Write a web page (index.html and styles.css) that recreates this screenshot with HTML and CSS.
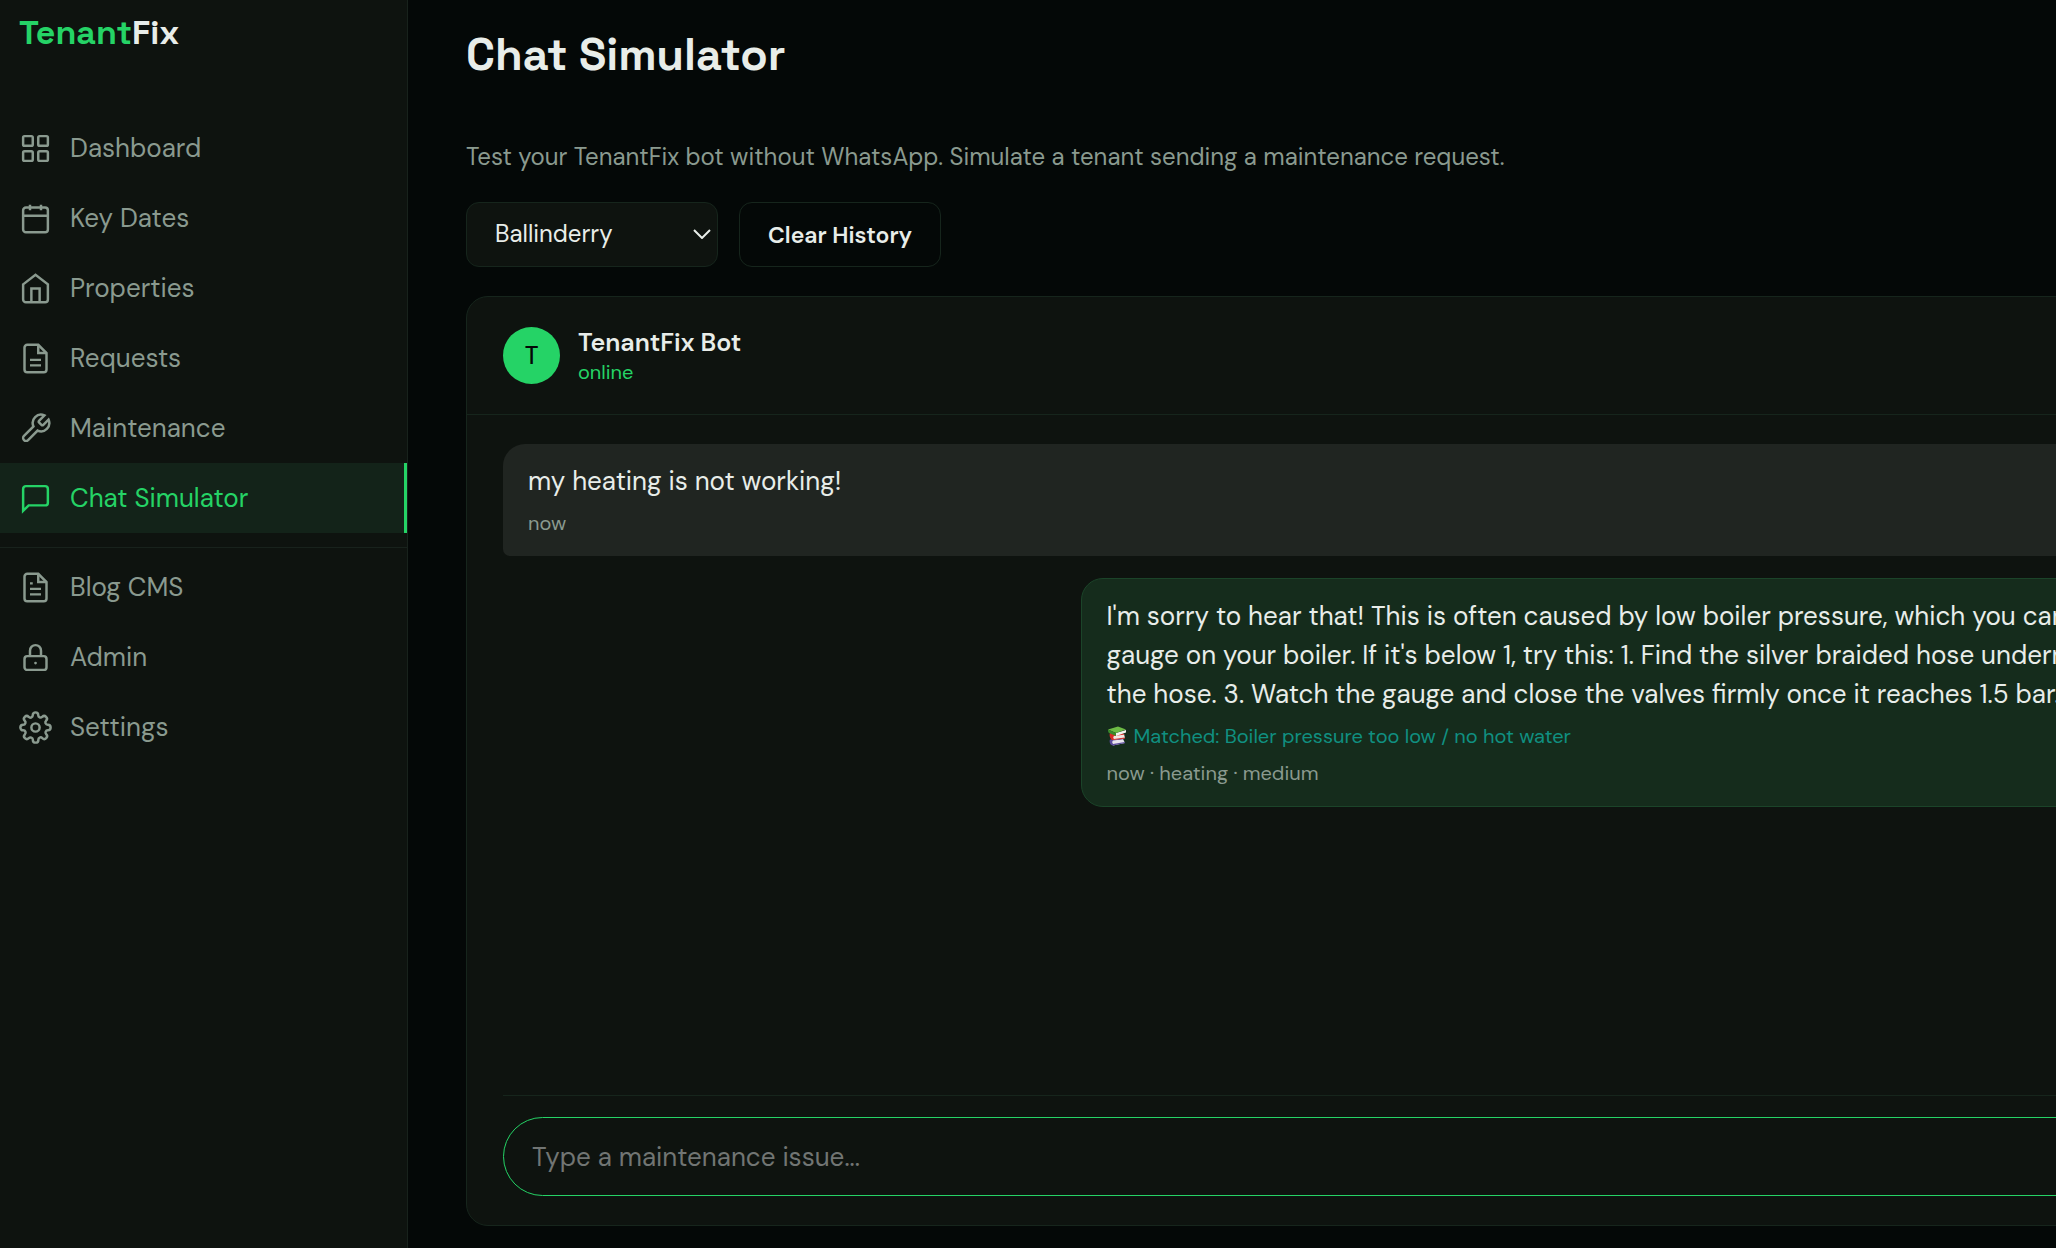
FILE: index.html
```
<!DOCTYPE html>
<html lang="en">

<head>
    <meta charset="UTF-8">
    <meta name="viewport" content="width=device-width, initial-scale=1.0">
    <title>TenantFix - Chat Simulator</title>
    <link rel="stylesheet" href="styles.css">
</head>

<body>
    <div class="layout">
        <aside class="sidebar">
            <a class="logo" href="#"><span>Tenant</span>Fix</a>

            <nav class="nav">
                <a href="#">
                    <svg viewBox="0 0 24 24"><rect x="3" y="3" width="7" height="7" rx="1"/><rect x="14" y="3" width="7" height="7" rx="1"/><rect x="3" y="14" width="7" height="7" rx="1"/><rect x="14" y="14" width="7" height="7" rx="1"/></svg>
                    Dashboard
                </a>
                <a href="#">
                    <svg viewBox="0 0 24 24"><rect x="3" y="4" width="18" height="18" rx="2"/><path d="M16 2v4M8 2v4M3 10h18"/></svg>
                    Key Dates
                </a>
                <a href="#">
                    <svg viewBox="0 0 24 24"><path d="M3 9l9-7 9 7v11a2 2 0 0 1-2 2H5a2 2 0 0 1-2-2z"/><path d="M9 22V12h6v10"/></svg>
                    Properties
                </a>
                <a href="#">
                    <svg viewBox="0 0 24 24"><path d="M14 2H6a2 2 0 0 0-2 2v16a2 2 0 0 0 2 2h12a2 2 0 0 0 2-2V8z"/><path d="M14 2v6h6M16 13H8M16 17H8"/></svg>
                    Requests
                </a>
                <a href="#">
                    <svg viewBox="0 0 24 24"><path d="M14.7 6.3a1 1 0 0 0 0 1.4l1.6 1.6a1 1 0 0 0 1.4 0l3.77-3.77a6 6 0 0 1-7.94 7.94l-6.91 6.91a2.12 2.12 0 0 1-3-3l6.91-6.91a6 6 0 0 1 7.94-7.94l-3.76 3.76z"/></svg>
                    Maintenance
                </a>
                <a href="#" class="active">
                    <svg viewBox="0 0 24 24"><path d="M21 15a2 2 0 0 1-2 2H7l-4 4V5a2 2 0 0 1 2-2h14a2 2 0 0 1 2 2z"/></svg>
                    Chat Simulator
                </a>
            </nav>

            <nav class="nav nav-admin">
                <a href="#">
                    <svg viewBox="0 0 24 24"><path d="M14 2H6a2 2 0 0 0-2 2v16a2 2 0 0 0 2 2h12a2 2 0 0 0 2-2V8z"/><path d="M14 2v6h6M16 13H8M16 17H8M10 9H8"/></svg>
                    Blog CMS
                </a>
                <a href="#">
                    <svg viewBox="0 0 24 24"><rect x="4" y="11" width="16" height="10" rx="2"/><path d="M8 11V7a4 4 0 0 1 8 0v4"/><circle class="dot" cx="12" cy="16" r="1"/></svg>
                    Admin
                </a>
                <a href="#">
                    <svg viewBox="0 0 24 24"><circle cx="12" cy="12" r="3"/><path d="M19.4 15a1.65 1.65 0 0 0 .33 1.82l.06.06a2 2 0 0 1-2.83 2.83l-.06-.06a1.65 1.65 0 0 0-1.82-.33 1.65 1.65 0 0 0-1 1.51V21a2 2 0 0 1-4 0v-.09A1.65 1.65 0 0 0 9 19.4a1.65 1.65 0 0 0-1.82.33l-.06.06a2 2 0 0 1-2.83-2.83l.06-.06a1.65 1.65 0 0 0 .33-1.82 1.65 1.65 0 0 0-1.51-1H3a2 2 0 0 1 0-4h.09A1.65 1.65 0 0 0 4.6 9a1.65 1.65 0 0 0-.33-1.82l-.06-.06a2 2 0 0 1 2.83-2.83l.06.06a1.65 1.65 0 0 0 1.82.33H9a1.65 1.65 0 0 0 1-1.51V3a2 2 0 0 1 4 0v.09a1.65 1.65 0 0 0 1 1.51 1.65 1.65 0 0 0 1.82-.33l.06-.06a2 2 0 0 1 2.83 2.83l-.06.06a1.65 1.65 0 0 0-.33 1.82V9a1.65 1.65 0 0 0 1.51 1H21a2 2 0 0 1 0 4h-.09a1.65 1.65 0 0 0-1.51 1z"/></svg>
                    Settings
                </a>
            </nav>
        </aside>

        <main class="main">
            <h1>Chat Simulator</h1>
            <p class="intro">Test your TenantFix bot without WhatsApp. Simulate a tenant sending a maintenance request.</p>

            <div class="controls">
                <div class="select-wrap">
                    <select id="property" aria-label="Property">
                        <option>Ballinderry</option>
                    </select>
                    <svg viewBox="0 0 18 10"><path d="M1 1l8 8 8-8"/></svg>
                </div>
                <button type="button" class="btn" id="clearHistory">Clear History</button>
            </div>

            <section class="chat">
                <header class="chat-header">
                    <div class="avatar">T</div>
                    <div class="bot-info">
                        <div class="bot-name">TenantFix Bot</div>
                        <div class="bot-status">online</div>
                    </div>
                </header>

                <div class="messages">
                    <div class="message tenant">
                        <p>my heating is not working!</p>
                        <div class="meta">now</div>
                    </div>
                    <div class="message bot">
                        <p>I'm sorry to hear that! This is often caused by low boiler pressure, which you can<br>
                            gauge on your boiler. If it's below 1, try this: 1. Find the silver braided hose underneath<br>
                            the hose. 3. Watch the gauge and close the valves firmly once it reaches 1.5 bar.</p>
                        <div class="matched">
                            <svg viewBox="0 0 20 20">
                                <path fill="#e8e4ee" d="M4 14l12-1 2 4-12 2.500z"/>
                                <path fill="#5b4a9c" d="M3 13.500l11-1 4 .5-12 1.500c-1 1-1 2.500 0 3.500l12-2v1l-12 2.500c-3 0-4-4-3-6z"/>
                                <path fill="#f0e6e2" d="M5 9l12-1 1 4-12 2z"/>
                                <path fill="#d92b26" d="M3 7l12 0 3 1.500-11 1.500c-1 1-1 2 0 3l11-1.500v1l-12 1.500c-3 0-4-5-3-7z"/>
                                <path fill="#f2f4ee" d="M9 7l10-3 0 2.500-10 3.500z"/>
                                <path fill="#6dbb45" d="M1 3.500l10-3 8 3-10 3.500z"/>
                                <path fill="#3a8a2c" d="M1 3.500l8 3.500 0 3-7-3c-1-1-1-2.500-1-3.500z"/>
                            </svg>
                            Matched: Boiler pressure too low / no hot water
                        </div>
                        <div class="meta">now · heating · medium</div>
                    </div>
                </div>

                <form class="composer">
                    <input type="text" id="issue" aria-label="Maintenance issue" placeholder="Type a maintenance issue...">
                </form>
            </section>
        </main>
    </div>
</body>

</html>
```
FILE: styles.css
```
* {
    box-sizing: border-box;
}

body {
    margin: 0;
    background: #040807;
    color: #e8ede9;
    font-family: "DM Sans", Inter, sans-serif;
    font-size: 26px;
    line-height: 39px;
    overflow: hidden;
}

h1, p {
    margin: 0;
}

.layout {
    display: flex;
    height: 100vh;
}

/* sidebar */
.sidebar {
    flex: none;
    width: 408px;
    background: #0e130f;
    border-right: 1px solid #18221c;
}

.logo {
    display: block;
    height: 113px;
    padding: 13px 19px;
    color: #e8ede9;
    font-family: "Space Grotesk", "DM Sans", Inter, sans-serif;
    font-size: 34px;
    font-weight: 700;
    text-decoration: none;
}

.logo span {
    color: #25d366;
}

.nav a {
    display: flex;
    align-items: center;
    gap: 18px;
    height: 70px;
    padding-left: 19px;
    color: #8a9a8f;
    text-decoration: none;
}

.nav svg {
    width: 33px;
    height: 33px;
    fill: none;
    stroke: currentColor;
    stroke-width: 1.8;
}

.nav .dot {
    fill: currentColor;
    stroke: none;
}

.nav a.active {
    background: #132319;
    border-right: 3px solid #25d366;
    color: #25d366;
}

.nav-admin {
    margin-top: 14px;
    padding-top: 4px;
    border-top: 1px solid #18221c;
}

/* page, wider than the window */
.main {
    flex: none;
    display: flex;
    flex-direction: column;
    width: calc(100vw + 444px);
    padding: 26px 58px 22px;
}

h1 {
    font-family: "Space Grotesk", "DM Sans", Inter, sans-serif;
    font-size: 45px;
    font-weight: 700;
    line-height: 58px;
}

.intro {
    margin-top: 53px;
    color: #8a9a8f;
    font-size: 24px;
}

.controls {
    display: flex;
    gap: 21px;
    margin: 26px 0 29px;
}

.select-wrap {
    position: relative;
}

.select-wrap select,
.btn {
    height: 65px;
    padding: 0 28px;
    border: 1px solid #16251c;
    border-radius: 13px;
    color: #e8ede9;
    font-family: inherit;
}

.select-wrap select {
    appearance: none;
    width: 252px;
    padding-bottom: 2px;
    background: #0e130f;
    font-size: 24px;
}

.select-wrap svg {
    position: absolute;
    right: 7px;
    top: 27px;
    width: 18px;
    height: 10px;
    fill: none;
    stroke: #e8ede9;
    stroke-width: 2;
    pointer-events: none;
}

.btn {
    background: transparent;
    font-size: 23px;
    font-weight: 600;
}

/* chat */
.chat {
    flex: 1;
    display: flex;
    flex-direction: column;
    background: #0e130f;
    border: 1px solid #16251c;
    border-radius: 22px;
}

.chat-header {
    display: flex;
    align-items: center;
    gap: 18px;
    padding: 28px 36px;
    border-bottom: 1px solid #16251c;
}

.avatar {
    width: 57px;
    height: 57px;
    border-radius: 50%;
    background: #25d366;
    color: #040807;
    font-size: 24px;
    font-weight: 500;
    line-height: 57px;
    text-align: center;
}

.bot-info {
    padding-top: 3px;
}

.bot-name {
    font-size: 25px;
    font-weight: 600;
    line-height: 30px;
}

.bot-status {
    color: #25d366;
    font-size: 20px;
    line-height: 28px;
}

.messages {
    flex: 1;
    display: flex;
    flex-direction: column;
    gap: 22px;
    padding: 29px 36px;
}

.message {
    width: 75%;
    padding: 18px 25px;
    border-radius: 22px;
    white-space: nowrap;
}

.tenant {
    background: #202521;
    border-bottom-left-radius: 7px;
}

.bot {
    align-self: flex-end;
    background: #152c1c;
    border: 1px solid #1b4429;
    border-bottom-right-radius: 7px;
}

.meta,
.matched {
    margin-top: 7px;
    color: #8a9a8f;
    font-size: 20px;
    line-height: 30px;
}

.matched {
    display: flex;
    align-items: center;
    gap: 7px;
    color: #109081;
}

.matched svg {
    width: 20px;
    height: 20px;
}

.composer {
    margin: 0 36px 29px;
    padding-top: 21px;
    border-top: 1px solid #16251c;
}

.composer input {
    display: block;
    width: 100%;
    height: 79px;
    padding: 0 28px;
    background: #0e130f;
    border: 1px solid #25d366;
    border-radius: 40px;
    color: #e8ede9;
    font-family: inherit;
    font-size: 26px;
    outline: none;
}

.composer input::placeholder {
    color: #717573;
}
```
